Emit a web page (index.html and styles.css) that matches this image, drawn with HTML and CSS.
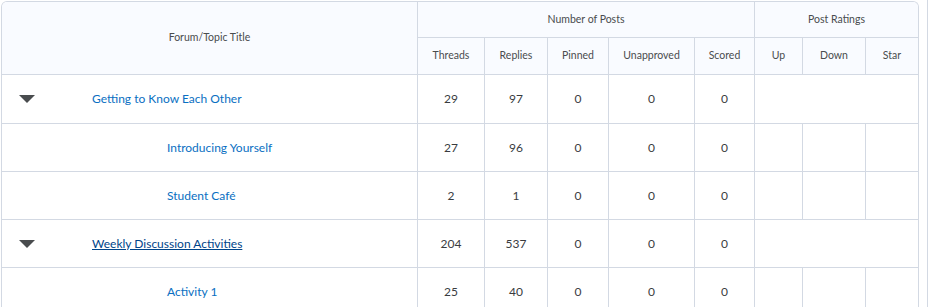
FILE: index.html
```html
<!DOCTYPE html>
<html lang="en">
<head>
<meta charset="utf-8">
<title>Forum statistics</title>
<link rel="stylesheet" href="styles.css">
</head>
<body>
<div class="frame">
  <div class="grid" role="table">
    <div class="cell head title-head" role="columnheader">Forum/Topic Title</div>
    <div class="cell head span5" role="columnheader">Number of Posts</div>
    <div class="cell head span3 last" role="columnheader">Post Ratings</div>

    <div class="cell head" role="columnheader">Threads</div>
    <div class="cell head" role="columnheader">Replies</div>
    <div class="cell head" role="columnheader">Pinned</div>
    <div class="cell head" role="columnheader">Unapproved</div>
    <div class="cell head" role="columnheader">Scored</div>
    <div class="cell head" role="columnheader">Up</div>
    <div class="cell head" role="columnheader">Down</div>
    <div class="cell head last" role="columnheader">Star</div>

    <div class="cell name" role="cell"><span class="toggle"><svg width="16" height="8" viewBox="0 0 16 8"><polygon points="0,0 16,0 8,8" fill="#494c4e"/></svg></span><a class="link" href="#">Getting to Know Each Other</a></div>
    <div class="cell num">29</div><div class="cell num">97</div><div class="cell num">0</div><div class="cell num">0</div><div class="cell num">0</div>
    <div class="cell span3 last"></div>

    <div class="cell name child" role="cell"><a class="link" href="#">Introducing Yourself</a></div>
    <div class="cell num">27</div><div class="cell num">96</div><div class="cell num">0</div><div class="cell num">0</div><div class="cell num">0</div>
    <div class="cell"></div><div class="cell"></div><div class="cell last"></div>

    <div class="cell name child" role="cell"><a class="link" href="#">Student Café</a></div>
    <div class="cell num">2</div><div class="cell num">1</div><div class="cell num">0</div><div class="cell num">0</div><div class="cell num">0</div>
    <div class="cell"></div><div class="cell"></div><div class="cell last"></div>

    <div class="cell name" role="cell"><span class="toggle"><svg width="16" height="8" viewBox="0 0 16 8"><polygon points="0,0 16,0 8,8" fill="#494c4e"/></svg></span><a class="link hover" href="#">Weekly Discussion Activities</a></div>
    <div class="cell num">204</div><div class="cell num">537</div><div class="cell num">0</div><div class="cell num">0</div><div class="cell num">0</div>
    <div class="cell span3 last"></div>

    <div class="cell name child" role="cell"><a class="link" href="#">Activity 1</a></div>
    <div class="cell num">25</div><div class="cell num">40</div><div class="cell num">0</div><div class="cell num">0</div><div class="cell num">0</div>
    <div class="cell"></div><div class="cell"></div><div class="cell last"></div>
  </div>
</div>
</body>
</html>
```
FILE: styles.css
```css
* { box-sizing: border-box; }
html, body { margin: 0; padding: 0; background: #fff; }
body { font-family: Lato, "Noto Sans", sans-serif; color: #494c4e; overflow: hidden; }

.frame {
  width: 928px;
  min-height: 307px;
  border-right: 1px solid #d3d9e3;
  padding: 1px 0 0 1px;
}

.grid {
  width: 918px;
  display: grid;
  grid-template-columns: 416px 67px 63px 61px 86px 60px 48px 63px 52px;
  grid-template-rows: 36px 37px 49px 48px 48px 48px 48px;
  border: 1px solid #d3d9e3;
  border-bottom: none;
  border-radius: 6px 6px 0 0;
  overflow: hidden;
}

.cell {
  border-right: 1px solid #d3d9e3;
  border-bottom: 1px solid #d3d9e3;
  display: flex;
  align-items: center;
  justify-content: center;
  min-width: 0;
}
.cell.last { border-right: none; }

.head {
  background: #f9fbff;
  font-size: 10.5px;
  color: #494c4e;
  padding-bottom: 2px;
}
.title-head { grid-row: span 2; }
.span5 { grid-column: span 5; }
.span3 { grid-column: span 3; }

.num { font-size: 12px; color: #3a3c3f; padding-bottom: 1px; }

.name { justify-content: flex-start; padding-left: 15px; padding-bottom: 1px; }
.name.child { padding-left: 165px; }
.toggle { width: 75px; display: flex; align-items: center; padding-top: 1px; }
.toggle svg { display: block; margin-left: 2px; }

.link {
  font-size: 12px;
  color: #0a6fc2;
  text-decoration: none;
}
.link.hover { color: #004489; text-decoration: underline; }
```
